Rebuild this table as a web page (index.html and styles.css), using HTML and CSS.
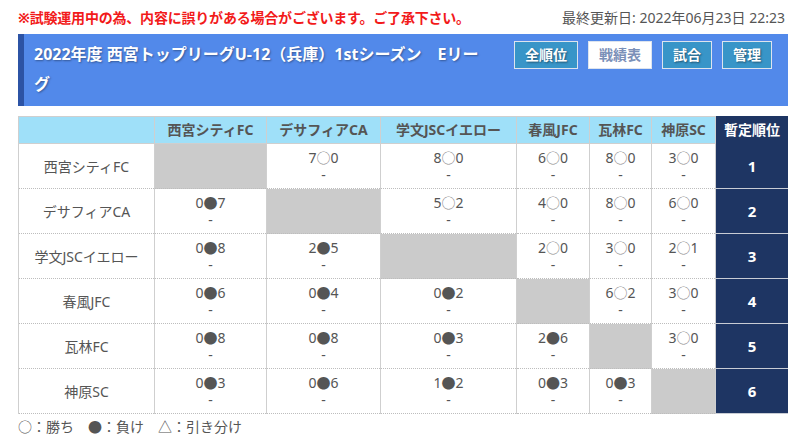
FILE: index.html
```html
<!DOCTYPE html>
<html lang="ja">
<head>
<meta charset="utf-8">
<title>戦績表</title>
<link rel="stylesheet" href="styles.css">
</head>
<body>
<div class="page">
  <div class="topline">
    <p class="notice">※試験運用中の為、内容に誤りがある場合がございます。ご了承下さい。</p>
    <p class="updated">最終更新日: 2022年06月23日 22:23</p>
  </div>
  <div class="titlebar">
    <h1 class="title">2022年度 西宮トップリーグU-12（兵庫）1stシーズン　Eリーグ</h1>
    <nav class="tabs">
      <a class="tab">全順位</a>
      <a class="tab active">戦績表</a>
      <a class="tab">試合</a>
      <a class="tab">管理</a>
    </nav>
  </div>
  <table class="standings">
    <colgroup>
      <col class="c-team"><col class="c1"><col class="c2"><col class="c3"><col class="c4"><col class="c5"><col class="c6"><col class="c-rank">
    </colgroup>
    <thead>
      <tr>
        <th></th>
        <th>西宮シティFC</th>
        <th>デサフィアCA</th>
        <th>学文JSCイエロー</th>
        <th>春風JFC</th>
        <th>瓦林FC</th>
        <th>神原SC</th>
        <th class="rank-head">暫定順位</th>
      </tr>
    </thead>
    <tbody>
      <tr>
        <td class="team">西宮シティFC</td>
        <td class="self"></td>
        <td><span class="score">7<span class="win">○</span>0</span><span class="note">-</span></td>
        <td><span class="score">8<span class="win">○</span>0</span><span class="note">-</span></td>
        <td><span class="score">6<span class="win">○</span>0</span><span class="note">-</span></td>
        <td><span class="score">8<span class="win">○</span>0</span><span class="note">-</span></td>
        <td><span class="score">3<span class="win">○</span>0</span><span class="note">-</span></td>
        <td class="rank">1</td>
      </tr>
      <tr>
        <td class="team">デサフィアCA</td>
        <td><span class="score">0<span class="loss">●</span>7</span><span class="note">-</span></td>
        <td class="self"></td>
        <td><span class="score">5<span class="win">○</span>2</span><span class="note">-</span></td>
        <td><span class="score">4<span class="win">○</span>0</span><span class="note">-</span></td>
        <td><span class="score">8<span class="win">○</span>0</span><span class="note">-</span></td>
        <td><span class="score">6<span class="win">○</span>0</span><span class="note">-</span></td>
        <td class="rank">2</td>
      </tr>
      <tr>
        <td class="team">学文JSCイエロー</td>
        <td><span class="score">0<span class="loss">●</span>8</span><span class="note">-</span></td>
        <td><span class="score">2<span class="loss">●</span>5</span><span class="note">-</span></td>
        <td class="self"></td>
        <td><span class="score">2<span class="win">○</span>0</span><span class="note">-</span></td>
        <td><span class="score">3<span class="win">○</span>0</span><span class="note">-</span></td>
        <td><span class="score">2<span class="win">○</span>1</span><span class="note">-</span></td>
        <td class="rank">3</td>
      </tr>
      <tr>
        <td class="team">春風JFC</td>
        <td><span class="score">0<span class="loss">●</span>6</span><span class="note">-</span></td>
        <td><span class="score">0<span class="loss">●</span>4</span><span class="note">-</span></td>
        <td><span class="score">0<span class="loss">●</span>2</span><span class="note">-</span></td>
        <td class="self"></td>
        <td><span class="score">6<span class="win">○</span>2</span><span class="note">-</span></td>
        <td><span class="score">3<span class="win">○</span>0</span><span class="note">-</span></td>
        <td class="rank">4</td>
      </tr>
      <tr>
        <td class="team">瓦林FC</td>
        <td><span class="score">0<span class="loss">●</span>8</span><span class="note">-</span></td>
        <td><span class="score">0<span class="loss">●</span>8</span><span class="note">-</span></td>
        <td><span class="score">0<span class="loss">●</span>3</span><span class="note">-</span></td>
        <td><span class="score">2<span class="loss">●</span>6</span><span class="note">-</span></td>
        <td class="self"></td>
        <td><span class="score">3<span class="win">○</span>0</span><span class="note">-</span></td>
        <td class="rank">5</td>
      </tr>
      <tr>
        <td class="team">神原SC</td>
        <td><span class="score">0<span class="loss">●</span>3</span><span class="note">-</span></td>
        <td><span class="score">0<span class="loss">●</span>6</span><span class="note">-</span></td>
        <td><span class="score">1<span class="loss">●</span>2</span><span class="note">-</span></td>
        <td><span class="score">0<span class="loss">●</span>3</span><span class="note">-</span></td>
        <td><span class="score">0<span class="loss">●</span>3</span><span class="note">-</span></td>
        <td class="self"></td>
        <td class="rank">6</td>
      </tr>
    </tbody>
  </table>
  <p class="legend"><span class="sym">○</span>：勝ち　<span class="sym">●</span>：負け　<span class="sym">△</span>：引き分け</p>
</div>
<div class="band"></div>
</body>
</html>
```
FILE: styles.css
```css
html, body {
  margin: 0;
  padding: 0;
  background: #fff;
}
body {
  font-family: "Noto Sans", "Noto Sans CJK JP", sans-serif;
  font-size: 14px;
  color: #555;
  overflow: hidden;
}
.page {
  width: 770px;
  margin-left: 18px;
}
.topline {
  display: flex;
  justify-content: space-between;
  align-items: center;
  height: 34px;
  padding-right: 3px;
}
.topline p {
  margin: 0;
}
.notice {
  color: #f21a1a;
  font-weight: bold;
  font-size: 14px;
  letter-spacing: -0.2px;
}
.updated {
  color: #555;
  font-size: 14px;
}
.titlebar {
  display: flex;
  align-items: flex-start;
  background: #5289ea;
  border-left: 6px solid #2c53a5;
  padding: 5px 16px 7px 10px;
}
.title {
  flex: 1;
  margin: 0 20px 0 0;
  font-size: 16px;
  line-height: 30px;
  font-weight: bold;
  color: #fff;
  text-shadow: 1px 1px 2px rgba(0, 0, 0, 0.35);
}
.tabs {
  display: flex;
  gap: 10px;
  margin-top: 2px;
}
.tab {
  display: block;
  padding: 0 10px;
  line-height: 26px;
  border: 1px solid #dde4ee;
  background: #3895c8;
  color: #fff;
  font-weight: bold;
  font-size: 14px;
  text-shadow: 1px 1px 2px rgba(0, 0, 0, 0.45);
}
.tab.active {
  background: #fff;
  color: #7b90b8;
  text-shadow: none;
}
.standings {
  margin-top: 10px;
  width: 771px;
  border-collapse: collapse;
  table-layout: fixed;
}
.c-team { width: 136px; }
.c1 { width: 112px; }
.c2 { width: 114px; }
.c3 { width: 136px; }
.c4 { width: 73px; }
.c5 { width: 62px; }
.c6 { width: 64px; }
.c-rank { width: 73px; }
.standings th {
  background: #9fe0f9;
  font-weight: bold;
  color: #555;
  line-height: 16px;
  padding: 5px 0;
  border: 1px solid #cfcfcf;
  text-align: center;
  white-space: nowrap;
}
.standings th.rank-head {
  background: #1e3563;
  color: #fff;
  border-color: #1e3563;
}
.standings td {
  text-align: center;
  vertical-align: middle;
  padding: 5px 0;
  line-height: 17px;
  border-left: 1px solid #cfcfcf;
  border-right: 1px solid #cfcfcf;
  border-bottom: 1px dotted #bdbdbd;
  color: #555;
}
.standings td.self {
  background: #cbcbcb;
}
.standings td.rank {
  background: #1e3563;
  color: #fff;
  font-weight: bold;
  font-size: 15px;
  border-color: #1e3563;
  border-bottom: 1px solid #c8ccd4;
}
.score, .note {
  display: block;
}
.win, .loss, .sym {
  font-family: "Noto Sans CJK JP", sans-serif;
}
.win {
  color: #8a8a8a;
}
.loss {
  color: #555;
}
.legend {
  margin: 2px 0 0;
  line-height: 20px;
  font-size: 14px;
  color: #555;
}
.band {
  height: 10px;
  margin-top: 2px;
  background: #f0f0f0;
}
```
